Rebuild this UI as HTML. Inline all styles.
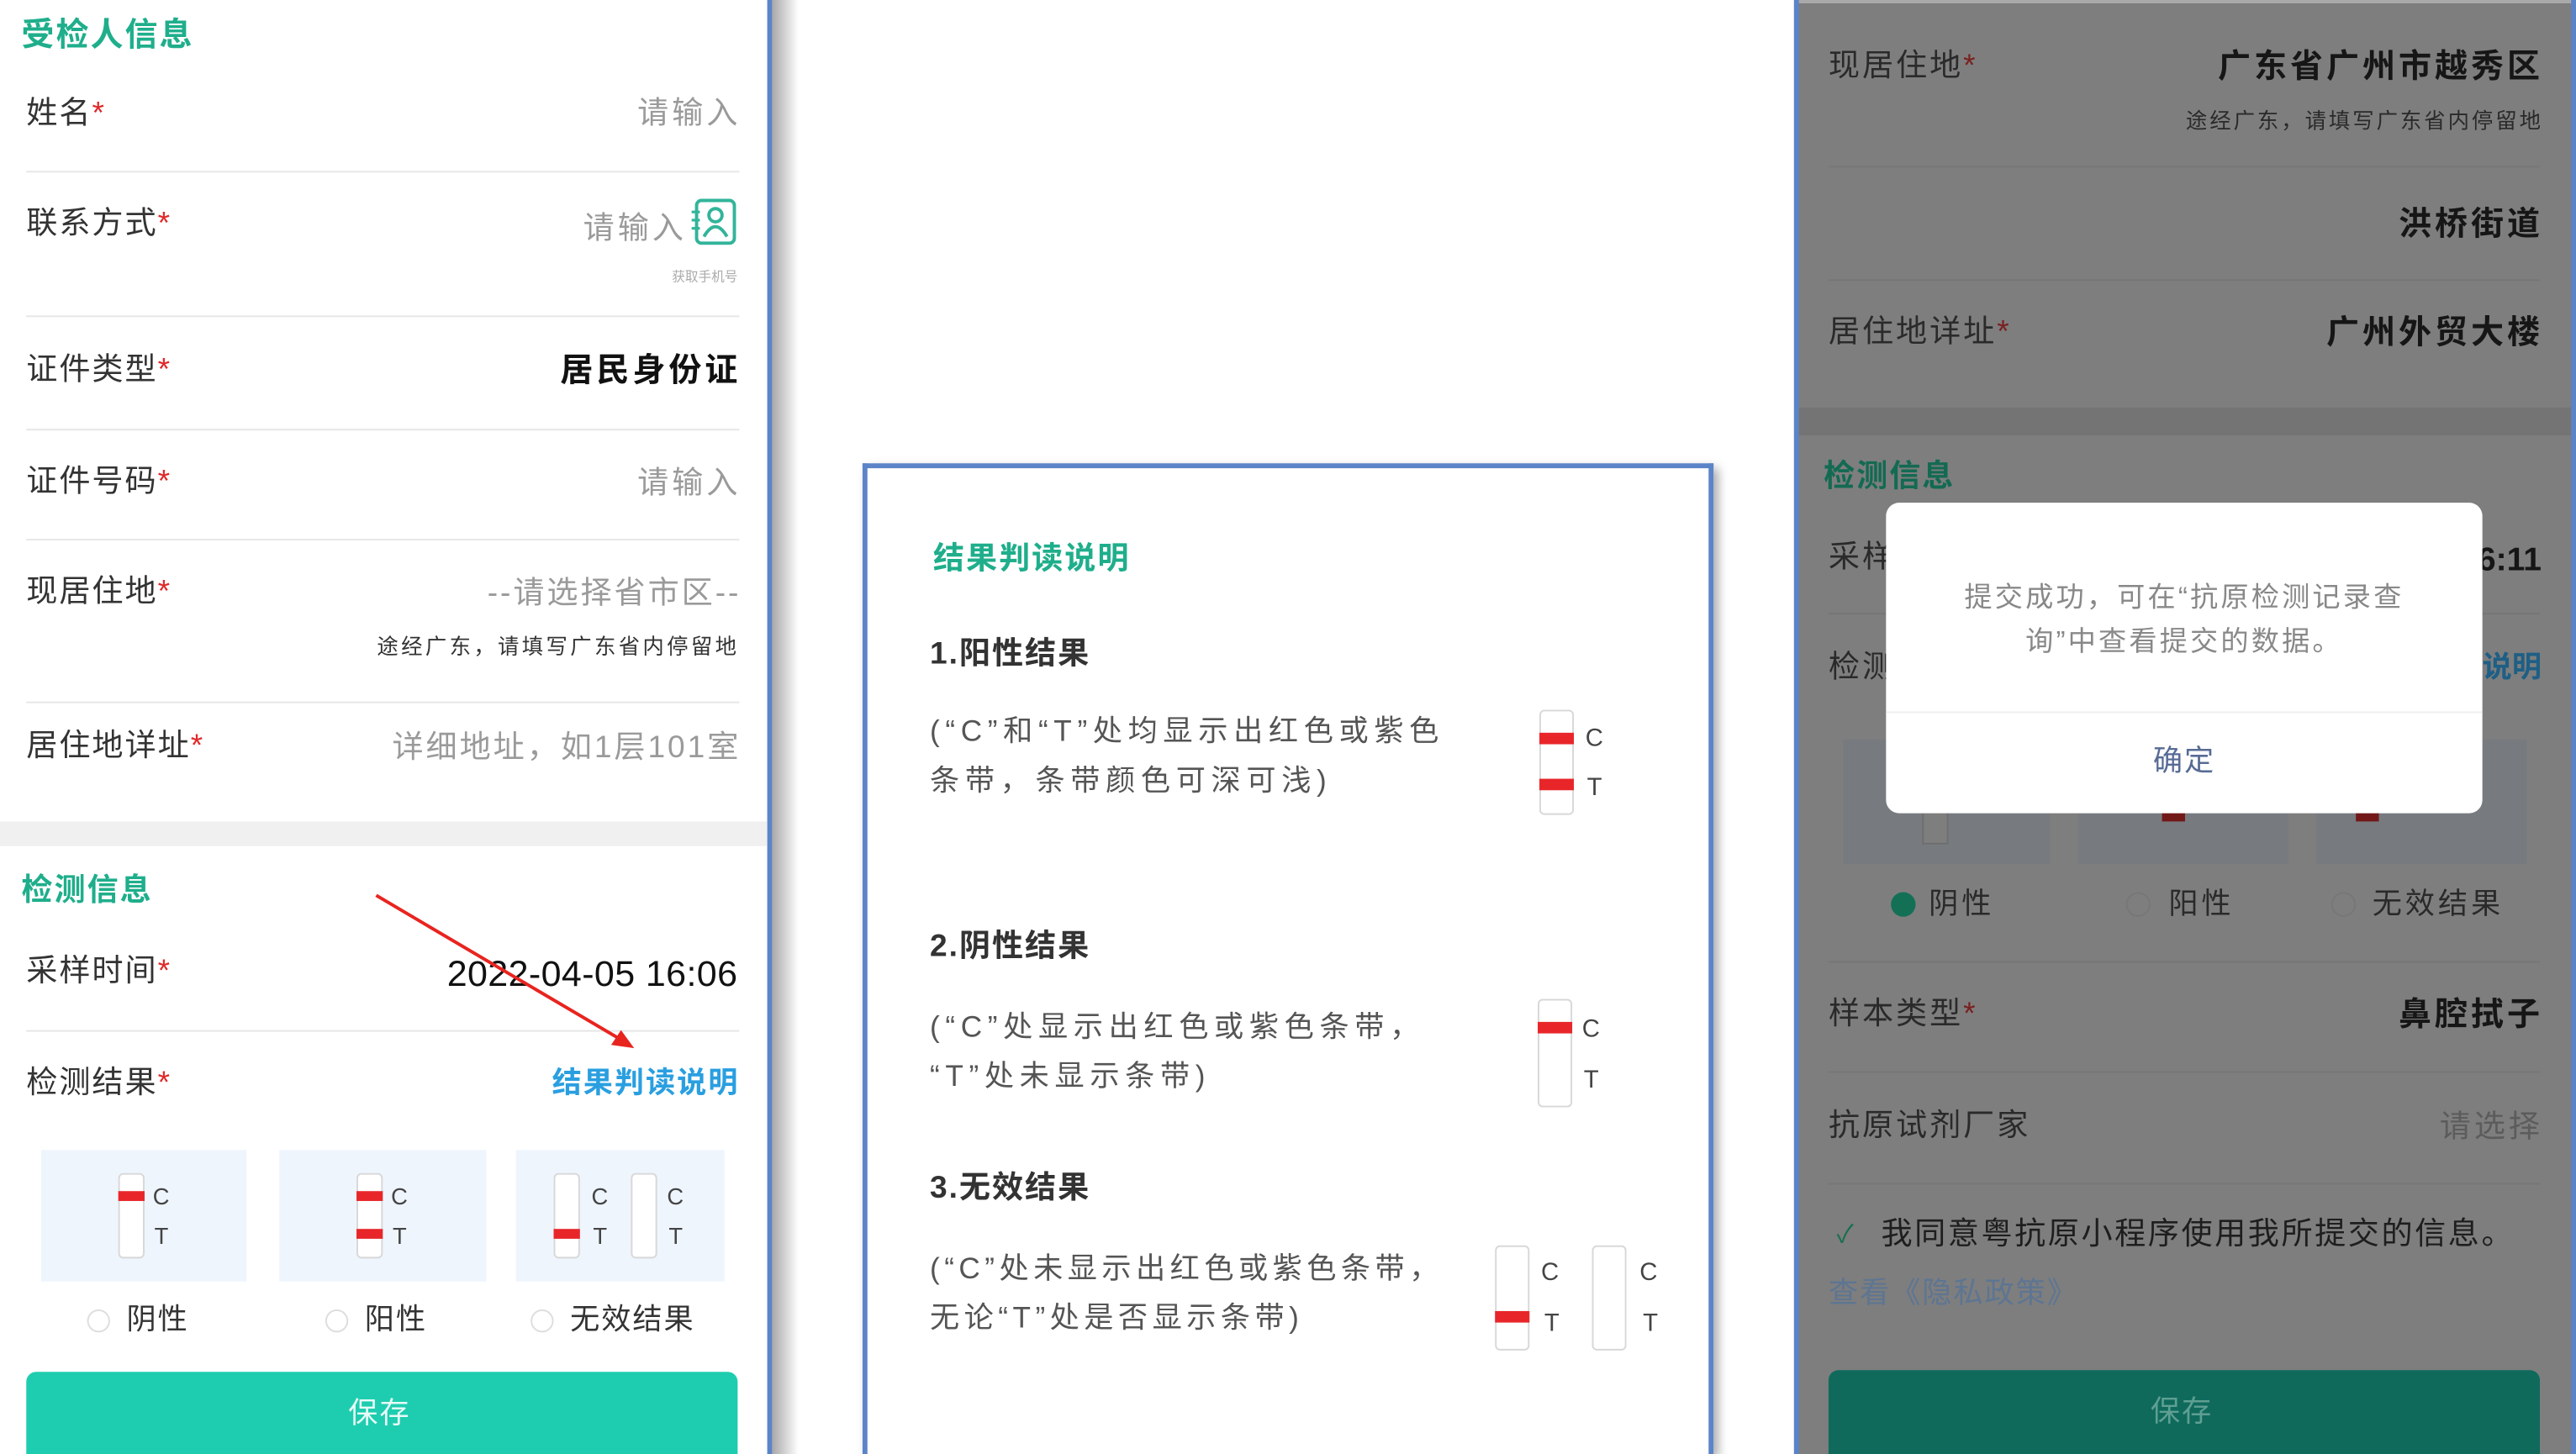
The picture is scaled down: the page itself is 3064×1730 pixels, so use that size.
<!DOCTYPE html>
<html><head><meta charset="utf-8">
<style>
html,body{margin:0;padding:0;background:#fff;}
body{width:3064px;height:1730px;overflow:hidden;position:relative;font-family:"Liberation Sans","Noto Sans CJK SC",sans-serif;}
#s{position:absolute;left:0;top:0;width:1568px;height:885px;transform:scale(1.9541,1.9548);transform-origin:0 0;overflow:hidden;}
.a{position:absolute;white-space:nowrap;line-height:1;}
.lb{font-size:19px;color:#333;letter-spacing:1px;}
.st{color:#e02828;}
.ph{font-size:19px;color:#9a9a9a;letter-spacing:2px;}
.hr{position:absolute;height:1px;background:#e6e6e6;}
.strip{position:absolute;background:#fff;border:1px solid #d8d8d8;border-radius:3px;box-sizing:border-box;}
.bar{position:absolute;left:-1px;right:-1px;height:6px;background:#e8262a;}
.ct{position:absolute;font-size:14px;color:#444;line-height:1;}
.box{position:absolute;background:#eef5fd;}
.rad{position:absolute;width:14px;height:14px;border:1px solid #ddd;border-radius:50%;box-sizing:border-box;background:#fff;}
.g{color:#1fae8b;font-weight:bold;font-size:19px;letter-spacing:1px;}
.mt{font-size:18px;color:#555;line-height:30px;letter-spacing:3.4px;}
.rb{font-size:20px;font-weight:bold;color:#161616;letter-spacing:2px;}
.rl{font-size:19px;color:#2a2a2a;letter-spacing:1.5px;}
</style></head><body>
<div id="s">
<!-- LEFT PANEL -->
<div style="position:absolute;left:0;top:0;width:467px;height:885px;background:#fff;"></div>
<div style="position:absolute;left:467px;top:0;width:3px;height:885px;background:#5b84c8;"></div>
<div style="position:absolute;left:470px;top:0;width:16px;height:885px;background:linear-gradient(90deg,#a8a8a8,#fff);"></div>

<div class="a g" style="left:13px;top:12px;font-size:20px;">受检人信息</div>

<div class="a lb" style="left:16px;top:60px;">姓名<span class="st">*</span></div>
<div class="a ph" style="right:1117px;top:60px;">请输入</div>
<div class="hr" style="left:16px;width:434px;top:104px;"></div>

<div class="a lb" style="left:16px;top:127px;">联系方式<span class="st">*</span></div>
<div class="a ph" style="right:1150px;top:130px;">请输入</div>
<svg style="position:absolute;left:419px;top:120px" width="30" height="30" viewBox="0 0 30 30"><rect x="5" y="2" width="23" height="26" rx="3" fill="none" stroke="#32b49a" stroke-width="2"/><circle cx="16.5" cy="11" r="4" fill="none" stroke="#32b49a" stroke-width="2"/><path d="M9.5 24 Q16.5 12 23.5 24" fill="none" stroke="#32b49a" stroke-width="2"/><path d="M2 9h5M2 14h5M2 19h5" stroke="#32b49a" stroke-width="1.6"/></svg>
<div class="a" style="right:1119px;top:165px;font-size:8px;color:#aaa;">获取手机号</div>
<div class="hr" style="left:16px;width:434px;top:192px;"></div>

<div class="a lb" style="left:16px;top:216px;">证件类型<span class="st">*</span></div>
<div class="a" style="right:1117px;top:216px;font-size:20px;font-weight:bold;color:#111;letter-spacing:2px;">居民身份证</div>
<div class="hr" style="left:16px;width:434px;top:261px;"></div>

<div class="a lb" style="left:16px;top:284px;">证件号码<span class="st">*</span></div>
<div class="a ph" style="right:1117px;top:285px;">请输入</div>
<div class="hr" style="left:16px;width:434px;top:328px;"></div>

<div class="a lb" style="left:16px;top:351px;">现居住地<span class="st">*</span></div>
<div class="a ph" style="right:1117px;top:352px;letter-spacing:1.5px;">--请选择省市区--</div>
<div class="a" style="right:1118px;top:387px;font-size:13px;color:#333;letter-spacing:1.7px;">途经广东，请填写广东省内停留地</div>
<div class="hr" style="left:16px;width:434px;top:427px;"></div>

<div class="a lb" style="left:16px;top:445px;">居住地详址<span class="st">*</span></div>
<div class="a ph" style="right:1117px;top:446px;letter-spacing:1.5px;">详细地址，如1层101室</div>

<div style="position:absolute;left:0;top:500px;width:467px;height:15px;background:#f0f0f0;"></div>

<div class="a g" style="left:13px;top:533px;">检测信息</div>
<div class="a lb" style="left:16px;top:582px;">采样时间<span class="st">*</span></div>
<div class="a" style="right:1119px;top:582px;font-size:22px;color:#111;letter-spacing:0.2px;">2022-04-05 16:06</div>
<div class="hr" style="left:16px;width:434px;top:627px;"></div>
<div class="a lb" style="left:16px;top:650px;">检测结果<span class="st">*</span></div>
<div class="a" style="right:1118px;top:650px;font-size:18px;color:#2a9fe0;font-weight:bold;letter-spacing:1px;">结果判读说明</div>
<svg style="position:absolute;left:0;top:0" width="467" height="700"><line x1="229" y1="545" x2="380" y2="634" stroke="#e8241f" stroke-width="2"/><polygon points="386,638 372,636 378,627" fill="#e8241f"/></svg>

<div class="box" style="left:25px;top:700px;width:125px;height:80px;"></div>
<div class="box" style="left:170px;top:700px;width:126px;height:80px;"></div>
<div class="box" style="left:314px;top:700px;width:127px;height:80px;"></div>
<div class="strip" style="left:72px;top:714px;width:16px;height:52px;"><div class="bar" style="top:10px"></div></div>
<div class="ct" style="left:93px;top:721px;">C</div><div class="ct" style="left:94px;top:745px;">T</div>
<div class="strip" style="left:217px;top:714px;width:16px;height:52px;"><div class="bar" style="top:10px"></div><div class="bar" style="top:33px"></div></div>
<div class="ct" style="left:238px;top:721px;">C</div><div class="ct" style="left:239px;top:745px;">T</div>
<div class="strip" style="left:337px;top:714px;width:16px;height:52px;"><div class="bar" style="top:33px"></div></div>
<div class="ct" style="left:360px;top:721px;">C</div><div class="ct" style="left:361px;top:745px;">T</div>
<div class="strip" style="left:384px;top:714px;width:16px;height:52px;"></div>
<div class="ct" style="left:406px;top:721px;">C</div><div class="ct" style="left:407px;top:745px;">T</div>

<div class="rad" style="left:53px;top:797px;"></div><div class="a" style="left:77px;top:794px;font-size:18px;color:#333;letter-spacing:1px;">阴性</div>
<div class="rad" style="left:198px;top:797px;"></div><div class="a" style="left:222px;top:794px;font-size:18px;color:#333;letter-spacing:1px;">阳性</div>
<div class="rad" style="left:323px;top:797px;"></div><div class="a" style="left:347px;top:794px;font-size:18px;color:#333;letter-spacing:1px;">无效结果</div>

<div style="position:absolute;left:16px;top:835px;width:433px;height:50px;background:#1ecdb0;border-radius:6px 6px 0 0;"></div>
<div class="a" style="left:212px;top:851px;font-size:18px;color:#e8fbf7;letter-spacing:1px;">保存</div>

<!-- MIDDLE PANEL -->
<div style="position:absolute;left:525px;top:282px;width:518px;height:603px;border:3px solid #5b84c8;border-bottom:none;box-sizing:border-box;background:#fff;box-shadow:3px 3px 6px rgba(0,0,0,0.35);"></div>
<div class="a g" style="left:568px;top:331px;">结果判读说明</div>
<div class="a" style="left:566px;top:389px;font-size:19px;color:#333;font-weight:bold;letter-spacing:1px;">1.阳性结果</div>
<div class="a mt" style="left:566px;top:430px;">(“C”和“T”处均显示出红色或紫色<br>条带，条带颜色可深可浅)</div>
<div class="strip" style="left:937px;top:432px;width:21px;height:64px;"><div class="bar" style="top:13px;height:7px"></div><div class="bar" style="top:41px;height:7px"></div></div>
<div class="ct" style="left:965px;top:442px;font-size:15px;">C</div><div class="ct" style="left:966px;top:472px;font-size:15px;">T</div>

<div class="a" style="left:566px;top:567px;font-size:19px;color:#333;font-weight:bold;letter-spacing:1px;">2.阴性结果</div>
<div class="a mt" style="left:566px;top:610px;">(“C”处显示出红色或紫色条带，<br>“T”处未显示条带)</div>
<div class="strip" style="left:936px;top:608px;width:21px;height:66px;"><div class="bar" style="top:13px;height:7px"></div></div>
<div class="ct" style="left:963px;top:619px;font-size:15px;">C</div><div class="ct" style="left:964px;top:650px;font-size:15px;">T</div>

<div class="a" style="left:566px;top:714px;font-size:19px;color:#333;font-weight:bold;letter-spacing:1px;">3.无效结果</div>
<div class="a mt" style="left:566px;top:757px;letter-spacing:2.8px;">(“C”处未显示出红色或紫色条带，<br>无论“T”处是否显示条带)</div>
<div class="strip" style="left:910px;top:758px;width:21px;height:64px;"><div class="bar" style="top:39px;height:7px"></div></div>
<div class="ct" style="left:938px;top:767px;font-size:15px;">C</div><div class="ct" style="left:940px;top:798px;font-size:15px;">T</div>
<div class="strip" style="left:969px;top:758px;width:21px;height:64px;"></div>
<div class="ct" style="left:998px;top:767px;font-size:15px;">C</div><div class="ct" style="left:1000px;top:798px;font-size:15px;">T</div>

<!-- RIGHT PANEL -->
<div style="position:absolute;left:1092px;top:0;width:476px;height:885px;background:#7e7e7e;"></div>
<div style="position:absolute;left:1092px;top:0;width:3px;height:885px;background:#5b84c8;"></div>
<div style="position:absolute;left:1565px;top:0;width:3px;height:885px;background:#5b84c8;"></div>
<div style="position:absolute;left:1095px;top:0;width:470px;height:2px;background:#aaa;"></div>

<div class="a rl" style="left:1113px;top:31px;">现居住地<span style="color:#7a2020">*</span></div>
<div class="a rb" style="right:20px;top:31px;">广东省广州市越秀区</div>
<div class="a" style="right:20px;top:67px;font-size:13px;color:#2a2a2a;letter-spacing:1.5px;">途经广东，请填写广东省内停留地</div>
<div class="hr" style="left:1113px;width:433px;top:101px;background:#767676;"></div>
<div class="a rb" style="right:20px;top:127px;">洪桥街道</div>
<div class="hr" style="left:1113px;width:433px;top:170px;background:#767676;"></div>
<div class="a rl" style="left:1113px;top:193px;">居住地详址<span style="color:#7a2020">*</span></div>
<div class="a rb" style="right:20px;top:193px;">广州外贸大楼</div>
<div style="position:absolute;left:1095px;top:248px;width:470px;height:17px;background:#747474;"></div>
<div class="a" style="left:1110px;top:281px;font-size:19px;font-weight:bold;color:#136a52;letter-spacing:1px;">检测信息</div>
<div class="a rl" style="left:1113px;top:330px;">采样</div>
<div class="a" style="right:21px;top:331px;font-size:20px;font-weight:bold;color:#161616;">6:11</div>
<div class="hr" style="left:1113px;width:433px;top:373px;background:#767676;"></div>
<div class="a rl" style="left:1113px;top:397px;">检测</div>
<div class="a" style="right:21px;top:397px;font-size:18px;font-weight:bold;color:#1e5f85;">说明</div>
<div style="position:absolute;left:1122px;top:450px;width:126px;height:76px;background:#777b80;"></div>
<div style="position:absolute;left:1265px;top:450px;width:128px;height:76px;background:#777b80;"></div>
<div style="position:absolute;left:1410px;top:450px;width:128px;height:76px;background:#777b80;"></div>
<div style="position:absolute;left:1170px;top:494px;width:14px;height:18px;background:#7e7e7e;border:1px solid #6e6e6e;"></div>
<div style="position:absolute;left:1316px;top:494px;width:14px;height:6px;background:#721818;"></div>
<div style="position:absolute;left:1434px;top:494px;width:14px;height:6px;background:#721818;"></div>
<div style="position:absolute;left:1151px;top:543px;width:15px;height:15px;border-radius:50%;background:#137055;"></div>
<div class="a" style="left:1174px;top:541px;font-size:18px;color:#2a2a2a;letter-spacing:2px;">阴性</div>
<div style="position:absolute;left:1294px;top:543px;width:15px;height:15px;border-radius:50%;border:1px solid #777;box-sizing:border-box;"></div>
<div class="a" style="left:1320px;top:541px;font-size:18px;color:#2a2a2a;letter-spacing:2px;">阳性</div>
<div style="position:absolute;left:1419px;top:543px;width:15px;height:15px;border-radius:50%;border:1px solid #777;box-sizing:border-box;"></div>
<div class="a" style="left:1444px;top:541px;font-size:18px;color:#2a2a2a;letter-spacing:2px;">无效结果</div>
<div class="hr" style="left:1113px;width:433px;top:585px;background:#767676;"></div>
<div class="a rl" style="left:1113px;top:608px;">样本类型<span style="color:#7a2020">*</span></div>
<div class="a rb" style="right:20px;top:608px;">鼻腔拭子</div>
<div class="hr" style="left:1113px;width:433px;top:652px;background:#767676;"></div>
<div class="a rl" style="left:1113px;top:676px;">抗原试剂厂家</div>
<div class="a" style="right:20px;top:677px;font-size:19px;color:#5c5c5c;letter-spacing:2px;">请选择</div>
<div class="hr" style="left:1113px;width:433px;top:720px;background:#767676;"></div>
<div class="a" style="left:1118px;top:744px;font-size:15px;color:#176f4c;">✓</div>
<div class="a" style="left:1145px;top:742px;font-size:19px;color:#1e1e1e;letter-spacing:1.3px;">我同意粤抗原小程序使用我所提交的信息。</div>
<div class="a" style="left:1113px;top:778px;font-size:18px;color:#5d7592;letter-spacing:1px;">查看《隐私政策》</div>
<div style="position:absolute;left:1113px;top:834px;width:433px;height:51px;background:#0f6a5c;border-radius:6px 6px 0 0;"></div>
<div class="a" style="left:1309px;top:850px;font-size:18px;color:#5f9f93;letter-spacing:1px;">保存</div>

<!-- dialog -->
<div style="position:absolute;left:1148px;top:306px;width:363px;height:189px;background:#fff;border-radius:8px;"></div>
<div class="a" style="left:1148px;width:363px;top:350px;font-size:17px;color:#888;text-align:center;line-height:27px;letter-spacing:1.6px;">提交成功，可在“抗原检测记录查<br>询”中查看提交的数据。</div>
<div class="hr" style="left:1148px;width:363px;top:433px;background:#eee;"></div>
<div class="a" style="left:1148px;width:363px;top:454px;font-size:18px;color:#576b95;text-align:center;letter-spacing:1px;">确定</div>
</div>
</body></html>
